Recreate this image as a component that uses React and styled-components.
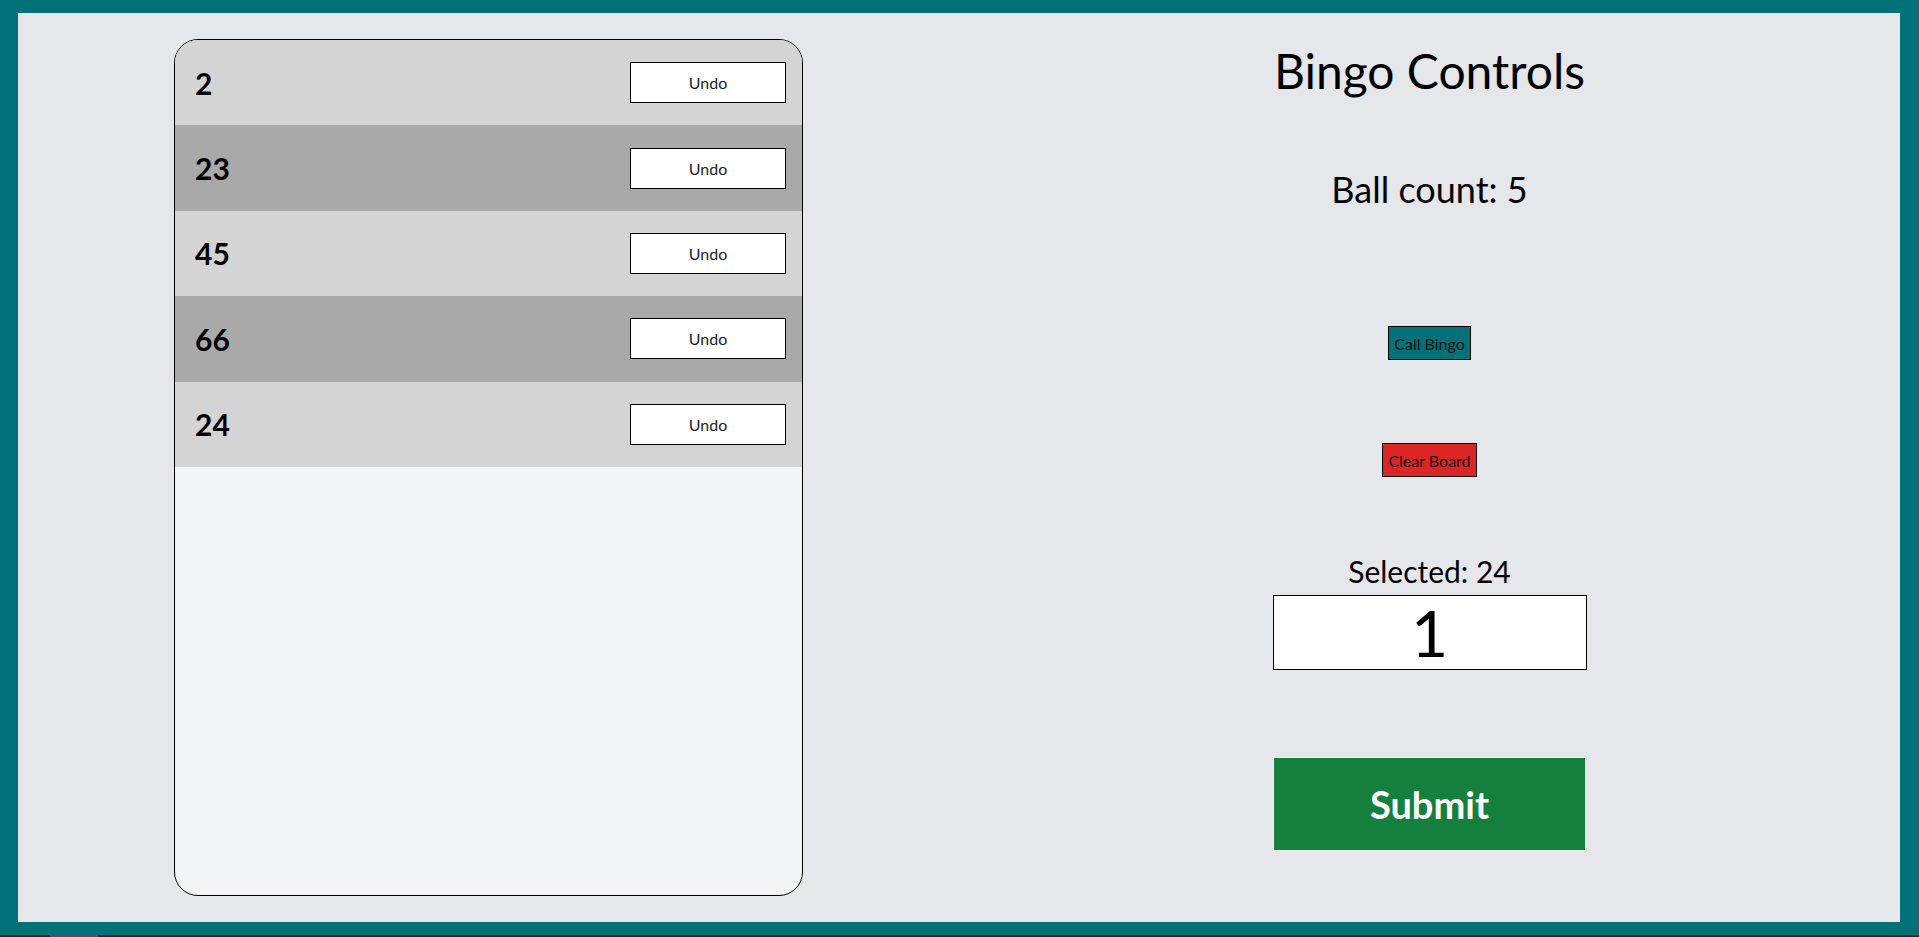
import React from "react";
import styled, { createGlobalStyle } from "styled-components";

const TEAL = "#027178";

const Global = createGlobalStyle`
  html, body { margin: 0; padding: 0; }
  body {
    font-family: Lato, "Open Sans", "Noto Sans", sans-serif;
    background: ${TEAL};
    overflow: hidden;
  }
  * { box-sizing: border-box; }
`;

const Frame = styled.div`
  width: 1919px;
  height: 937px;
  background: ${TEAL};
  display: flex;
  flex-direction: column;
`;

const Panel = styled.main`
  margin: 13px 19px 0 18px;
  height: 909px;
  background: #e5e7eb;
  display: grid;
  grid-template-columns: 1fr 1fr;
`;

const BottomStrip = styled.div`
  margin-top: 13px;
  height: 2px;
  background: #1e2b2c;
  display: flex;
  padding-left: 50px;
`;

const StripSegment = styled.div`
  width: 48px;
  height: 2px;
  background: #4a5556;
`;

const ListColumn = styled.section`
  display: flex;
  justify-content: center;
  padding-top: 26px;
`;

const Card = styled.div`
  width: 629px;
  height: 857px;
  background: #f3f4f6;
  border: 1px solid #000;
  border-radius: 24px;
  overflow: hidden;
  display: flex;
  flex-direction: column;
`;

const Row = styled.div`
  height: 85.4px;
  flex: none;
  display: flex;
  align-items: center;
  justify-content: space-between;
  padding: 0 16px 0 20px;
  background: ${(p) => (p.$dark ? "#a9a9a9" : "#d4d4d4")};
`;

const Num = styled.span`
  font-size: 30px;
  font-weight: 700;
  color: #000;
`;

const UndoButton = styled.button`
  width: 156px;
  height: 41px;
  background: #fff;
  border: 1px solid #000;
  font-family: inherit;
  font-size: 16px;
  color: #222;
  padding: 0;
  cursor: pointer;
`;

const Controls = styled.section`
  display: flex;
  flex-direction: column;
  align-items: center;
  padding-top: 34px;
`;

const Title = styled.h1`
  margin: 0;
  font-size: 48px;
  font-weight: 400;
  line-height: 1;
  color: #000;
`;

const Label = styled.div`
  margin-top: ${(p) => p.$mt}px;
  font-size: ${(p) => p.$size}px;
  line-height: 1;
  color: #000;
`;

const SmallButton = styled.button`
  margin-top: ${(p) => p.$mt}px;
  height: 34px;
  padding: 0 5px;
  border: 1px solid #000;
  background: ${(p) => p.$bg};
  font-family: inherit;
  font-size: 16px;
  color: #111;
  cursor: pointer;
`;

const NumberInput = styled.input`
  margin-top: 9px;
  width: 314px;
  height: 75px;
  border: 1px solid #000;
  background: #fff;
  text-align: center;
  font-family: inherit;
  font-size: 64px;
  font-weight: 400;
  color: #000;
  padding: 0;
  outline: none;
`;

const SubmitButton = styled.button`
  margin-top: 87px;
  width: 313px;
  height: 94px;
  background: #15803d;
  border: 1px solid #f3f4f6;
  color: #fff;
  font-family: inherit;
  font-size: 38px;
  font-weight: 700;
  cursor: pointer;
`;

const balls = [2, 23, 45, 66, 24];

export default function App() {
  return (
    <>
      <Global />
      <Frame>
        <Panel>
          <ListColumn>
            <Card>
              {balls.map((b, i) => (
                <Row key={b} $dark={i % 2 === 1}>
                  <Num>{b}</Num>
                  <UndoButton>Undo</UndoButton>
                </Row>
              ))}
            </Card>
          </ListColumn>
          <Controls>
            <Title>Bingo Controls</Title>
            <Label $mt={76} $size={36}>Ball count: 5</Label>
            <SmallButton $mt={119} $bg={TEAL}>Call Bingo</SmallButton>
            <SmallButton $mt={83} $bg="#dc2626">Clear Board</SmallButton>
            <Label $mt={79} $size={30}>Selected: 24</Label>
            <NumberInput type="text" defaultValue="1" />
            <SubmitButton>Submit</SubmitButton>
          </Controls>
        </Panel>
        <BottomStrip>
          <StripSegment />
        </BottomStrip>
      </Frame>
    </>
  );
}
